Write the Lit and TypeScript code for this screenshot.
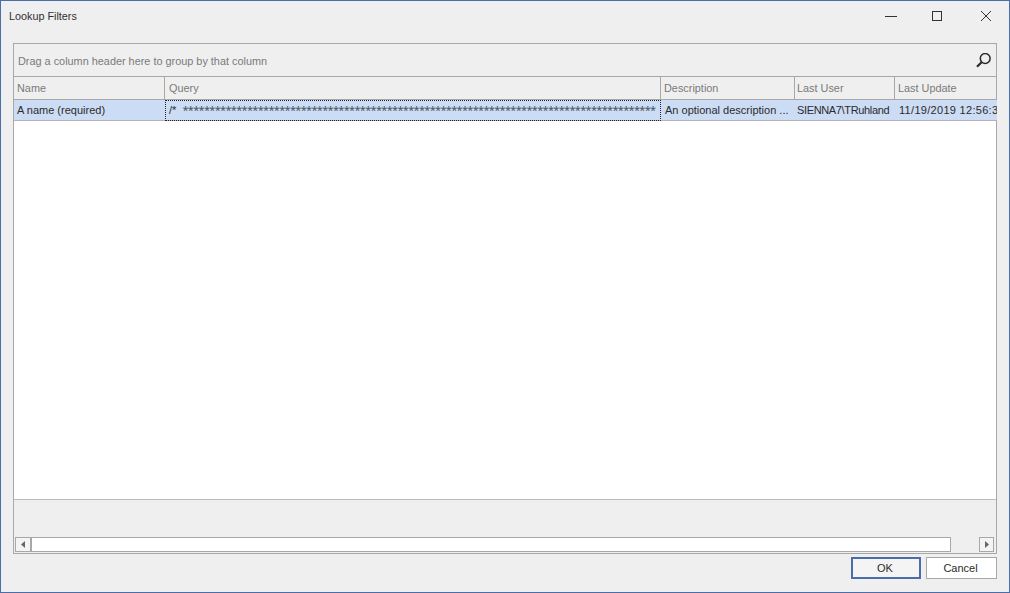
import { LitElement, html, css } from "lit";
import { customElement } from "lit/decorators.js";

const stars = "*".repeat(88);

@customElement("app-root")
export class AppRoot extends LitElement {
  static styles = css`
    :host {
      display: block;
      width: 1010px;
      height: 593px;
      font-family: "Liberation Sans", Arial, sans-serif;
      font-size: 11px;
      color: #2b2b2b;
    }
    * { box-sizing: border-box; }
    .window {
      width: 1010px;
      height: 593px;
      background: #efefef;
      border: 1px solid #4a6ea9;
      display: flex;
      flex-direction: column;
      overflow: hidden;
    }
    .titlebar {
      height: 42px;
      flex: none;
      display: flex;
      align-items: flex-start;
      justify-content: space-between;
      padding: 6px 0 0 8px;
    }
    .title { line-height: 18px; color: #303030; font-size: 10.8px; }
    .controls { display: flex; }
    .ctl { display: block; }
    .ctl.min { margin-right: 35px; }
    .ctl.max { margin-right: 37px; }
    .ctl.close { margin-right: 17px; }
    .grid {
      margin: 0 12px;
      height: 511px;
      flex: none;
      border: 1px solid #a8a8a8;
      display: flex;
      flex-direction: column;
    }
    .group {
      height: 33px;
      flex: none;
      display: flex;
      align-items: center;
      justify-content: space-between;
      padding: 2px 4px 0 4px;
      color: #7a7a7a;
      font-size: 10.88px;
      border-bottom: 1px solid #a8a8a8;
    }
    .cols {
      display: grid;
      grid-template-columns: 151px 496px 134px 100px 102px;
      flex: none;
    }
    .hd {
      height: 23px;
      line-height: 22px;
      padding-left: 3px;
      color: #7a7a7a;
      font-size: 10.88px;
      border-right: 1px solid #a8a8a8;
      border-bottom: 1px solid #a8a8a8;
      white-space: nowrap;
      overflow: hidden;
    }
    .hd.query { padding-left: 4px; }
    .hd.user { padding-left: 2px; }
    .hd.last { border-right: none; }
    .cell {
      height: 21px;
      line-height: 20px;
      padding-left: 4px;
      background: #ccdcf5;
      border-bottom: 1px solid #b4b4b4;
      white-space: nowrap;
      overflow: hidden;
      color: #2b2b2b;
    }
    .cell.first { padding-left: 3px; }
    .cell.focus {
      outline: 1px dotted #222;
      outline-offset: -1px;
      padding-left: 3px;
      border-left: 1px solid #ccdcf5;
    }
    .stars {
      font-family: "Noto Sans", sans-serif;
      letter-spacing: -0.685px;
      color: #4a5560;
      margin-left: 3px;
    }
    .cell.user { padding-left: 2px; letter-spacing: -0.35px; }
    .cell.date { letter-spacing: 0.3px; }
    .body {
      flex: 1;
      background: #ffffff;
      border-bottom: 1px solid #bcbcbc;
    }
    .footer { height: 37px; flex: none; }
    .scroll {
      height: 15px;
      flex: none;
      margin: 0 2px 1px 1px;
      display: flex;
      align-items: stretch;
    }
    .arrow {
      width: 15px;
      flex: none;
      background: #f4f4f4;
      border: 1px solid #a8a8a8;
      display: flex;
      align-items: center;
      justify-content: center;
    }
    .arrow.left { border-right: none; }
    .track {
      width: 921px;
      flex: none;
      background: #ffffff;
      border: 1px solid #a8a8a8;
      border-left-width: 2px;
    }
    .spacer { flex: 1; }
    .buttons {
      display: flex;
      justify-content: flex-end;
      gap: 5px;
      margin: 3px 12px 0 0;
    }
    .btn {
      height: 22px;
      background: #ffffff;
      border: 1px solid #a8a8a8;
      display: flex;
      align-items: center;
      justify-content: center;
      color: #2b2b2b;
      font: inherit;
      padding: 0 2px 0 0;
      width: 71px;
    }
    .btn.ok {
      width: 70px;
      border: 2px solid #4a6ea9;
      background: #f4f4f4;
    }
  `;

  render() {
    return html`
      <div class="window">
        <div class="titlebar">
          <div class="title">Lookup Filters</div>
          <div class="controls">
            <svg class="ctl min" width="12" height="20" viewBox="0 0 12 20"><path d="M0 9.5H13" stroke="#333" fill="none"/></svg>
            <svg class="ctl max" width="11" height="20" viewBox="0 0 11 20"><rect x="0.5" y="4.5" width="9" height="9" stroke="#333" fill="none"/></svg>
            <svg class="ctl close" width="12" height="20" viewBox="0 0 12 20"><path d="M1 4L11 14M11 4L1 14" stroke="#333" fill="none"/></svg>
          </div>
        </div>
        <div class="grid">
          <div class="group">
            <span>Drag a column header here to group by that column</span>
            <svg width="16" height="16" viewBox="0 0 16 16"><circle cx="9.2" cy="5.5" r="4.9" stroke="#2a2a2a" stroke-width="1.5" fill="none"/><path d="M5.6 9.2L1 13.8" stroke="#2a2a2a" stroke-width="2.2" fill="none"/></svg>
          </div>
          <div class="cols">
            <div class="hd">Name</div>
            <div class="hd query">Query</div>
            <div class="hd">Description</div>
            <div class="hd user">Last User</div>
            <div class="hd last">Last Update</div>
            <div class="cell first">A name (required)</div>
            <div class="cell focus">/* <span class="stars">${stars}</span></div>
            <div class="cell">An optional description ...</div>
            <div class="cell user">SIENNA7\\TRuhland</div>
            <div class="cell date">11/19/2019 12:56:33</div>
          </div>
          <div class="body"></div>
          <div class="footer"></div>
          <div class="scroll">
            <div class="arrow left"><svg width="5" height="7" viewBox="0 0 5 7"><path d="M4 0V7L0 3.5Z" fill="#666"/></svg></div>
            <div class="track"></div>
            <div class="spacer"></div>
            <div class="arrow"><svg width="5" height="7" viewBox="0 0 5 7"><path d="M1 0V7L5 3.5Z" fill="#666"/></svg></div>
          </div>
        </div>
        <div class="buttons">
          <button class="btn ok">OK</button>
          <button class="btn">Cancel</button>
        </div>
      </div>
    `;
  }
}
